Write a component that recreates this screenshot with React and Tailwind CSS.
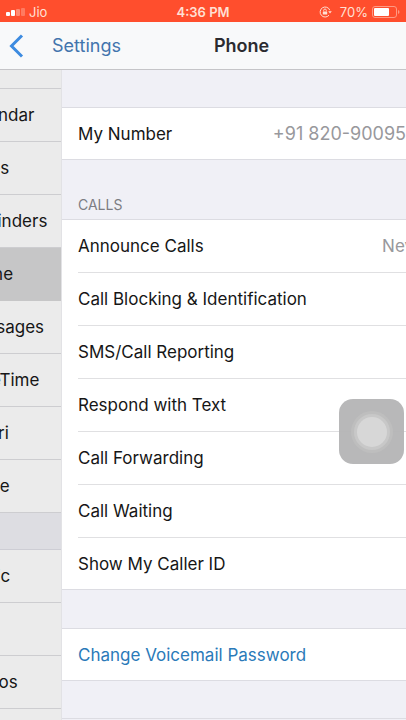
const apps = [
  { name: 'Calendar' },
  { name: 'Notes' },
  { name: 'Reminders' },
  { name: 'Phone', selected: true },
  { name: 'Messages' },
  { name: 'FaceTime' },
  { name: 'Safari' },
  { name: 'Home' },
];

const media = [{ name: 'Music' }, { name: '' }, { name: 'Photos' }, { name: '' }];

const calls = [
  { label: 'Announce Calls', value: 'Never' },
  { label: 'Call Blocking & Identification' },
  { label: 'SMS/Call Reporting' },
  { label: 'Respond with Text' },
  { label: 'Call Forwarding' },
  { label: 'Call Waiting' },
  { label: 'Show My Caller ID' },
];

function StatusBar() {
  return (
    <div className="grid h-[22px] shrink-0 grid-cols-3 items-center bg-[#ff4e2d] text-[13px] text-[#ffe0d4]">
      <div className="flex items-center gap-1 pl-1.5">
        <svg width="19" height="8" viewBox="0 0 19 8" aria-hidden="true">
          <rect x="0" y="4" width="4" height="4" rx="1" fill="#fff" />
          <rect x="5" y="2" width="4" height="6" rx="1" fill="#fff" />
          <rect x="10" y="1" width="4" height="7" rx="1" fill="#ff8a72" />
          <rect x="15" y="0" width="4" height="8" rx="1" fill="#ff7a60" />
        </svg>
        <span>Jio</span>
      </div>
      <div className="text-center font-semibold">4:36 PM</div>
      <div className="flex items-center justify-end gap-1 pr-1.5">
        <svg className="mr-1" width="13" height="12" viewBox="0 0 13 12" fill="none" stroke="#ffe0d4" aria-hidden="true">
          <path d="M10.8 4.2A5 5 0 1 0 10 9.2" />
          <path d="M9.2 5.2h3.6L11 7.6z" fill="#ffe0d4" stroke="none" />
          <rect x="3.8" y="5.4" width="4.4" height="3.2" rx="0.5" fill="#ffe0d4" stroke="none" />
          <path d="M4.7 5.4V4.3a1.3 1.3 0 0 1 2.6 0v1.1" strokeWidth="0.9" />
        </svg>
        <span>70%</span>
        <svg width="28" height="12" viewBox="0 0 28 12" fill="none" aria-hidden="true">
          <rect x="0.5" y="0.5" width="24" height="11" rx="2.5" stroke="#ff9a84" />
          <rect x="2" y="2" width="15" height="8" rx="1" fill="#fff" />
          <path d="M26 4v4c2-.8 2-3.2 0-4z" fill="#ff9a84" />
        </svg>
      </div>
    </div>
  );
}

function SidebarRow({ name, selected }) {
  return (
    <li className={selected ? 'bg-[#c6c6c7]' : 'bg-[#ebebeb]'}>
      <button
        type="button"
        className={
          'flex h-[53px] w-full items-center border-b text-left ' +
          (selected ? 'border-[#c6c6c7]' : 'border-[#cdcdd0]')
        }
      >
        <span className="-ml-[38px]">{name}</span>
      </button>
    </li>
  );
}

function Row({ label, value, last }) {
  return (
    <li className="pl-4">
      <button
        type="button"
        className={
          'flex w-full items-center justify-between text-left ' +
          (last ? 'h-[51px]' : 'h-[53px] border-b border-[#e0e0e2]')
        }
      >
        <span>{label}</span>
        {value && <span className="-mr-6 text-[#98989c]">{value}</span>}
      </button>
    </li>
  );
}

export default function App() {
  return (
    <div className="relative flex h-screen flex-col overflow-hidden bg-[#f0f0f6] font-['Inter','Liberation_Sans',sans-serif] text-[17px] leading-6 text-[#161616]">
      <StatusBar />
      <header className="grid h-12 shrink-0 grid-cols-[1fr_auto_1fr] items-center border-b border-[#c5c5c8] bg-[#f8f9fa]">
        <button type="button" className="flex items-center gap-7 pl-2 text-lg text-[#4274ad]">
          <svg width="16" height="24" viewBox="0 0 16 24" fill="none" stroke="#3d8be0" strokeWidth="3" aria-hidden="true">
            <path d="M14 1.5L3.5 12L14 22.5" />
          </svg>
          Settings
        </button>
        <h1 className="pl-[77px] text-lg font-semibold text-[#2b2b30]">Phone</h1>
        <span />
      </header>

      <div className="flex min-h-0 flex-1">
        <nav aria-label="Apps" className="w-[62px] shrink-0 overflow-hidden border-r border-[#e2e2e5] bg-[#ebebeb]">
          <div className="h-[19px] border-b border-[#cdcdd0]" />
          <ul>
            {apps.map((app) => (
              <SidebarRow key={app.name} {...app} />
            ))}
          </ul>
          <div className="h-[37px] border-b border-[#cdcdd4] bg-[#dddde2]" />
          <ul>
            {media.map((app, i) => (
              <SidebarRow key={i} {...app} />
            ))}
          </ul>
        </nav>

        <main className="min-w-0 flex-1 overflow-hidden">
          <section className="mt-[37px] flex h-[53px] items-center justify-between border-y border-[#dcdce2] bg-white pl-4 whitespace-nowrap">
            <span>My Number</span>
            <span className="text-lg text-[#98989c]">+91 820-90095</span>
          </section>

          <h2 className="flex h-[59px] items-end pb-1 pl-4 text-sm text-[#7d7d83]">CALLS</h2>
          <ul className="border-y border-[#dcdce2] bg-white">
            {calls.map((row, i) => (
              <Row key={row.label} {...row} last={i === calls.length - 1} />
            ))}
          </ul>

          <section className="mt-[38px] border-y border-[#dcdce2] bg-white">
            <button type="button" className="flex h-[51px] w-full items-center pl-4 text-left text-[#2a7ab9]">
              Change Voicemail Password
            </button>
          </section>
          <div className="mt-[37px] h-5 border-t border-[#dcdce2]" />
        </main>
      </div>

      <button
        type="button"
        aria-label="AssistiveTouch"
        className="absolute top-[399px] right-0.5 flex size-[65px] items-center justify-center rounded-[14px] bg-[#b4b4b5]/95"
      >
        <span className="flex size-[42px] items-center justify-center rounded-full bg-[#bebebe]">
          <span className="flex size-9 items-center justify-center rounded-full bg-[#c8c8c8]">
            <span className="size-[30px] rounded-full bg-[#d7d7d7]" />
          </span>
        </span>
      </button>
    </div>
  );
}
